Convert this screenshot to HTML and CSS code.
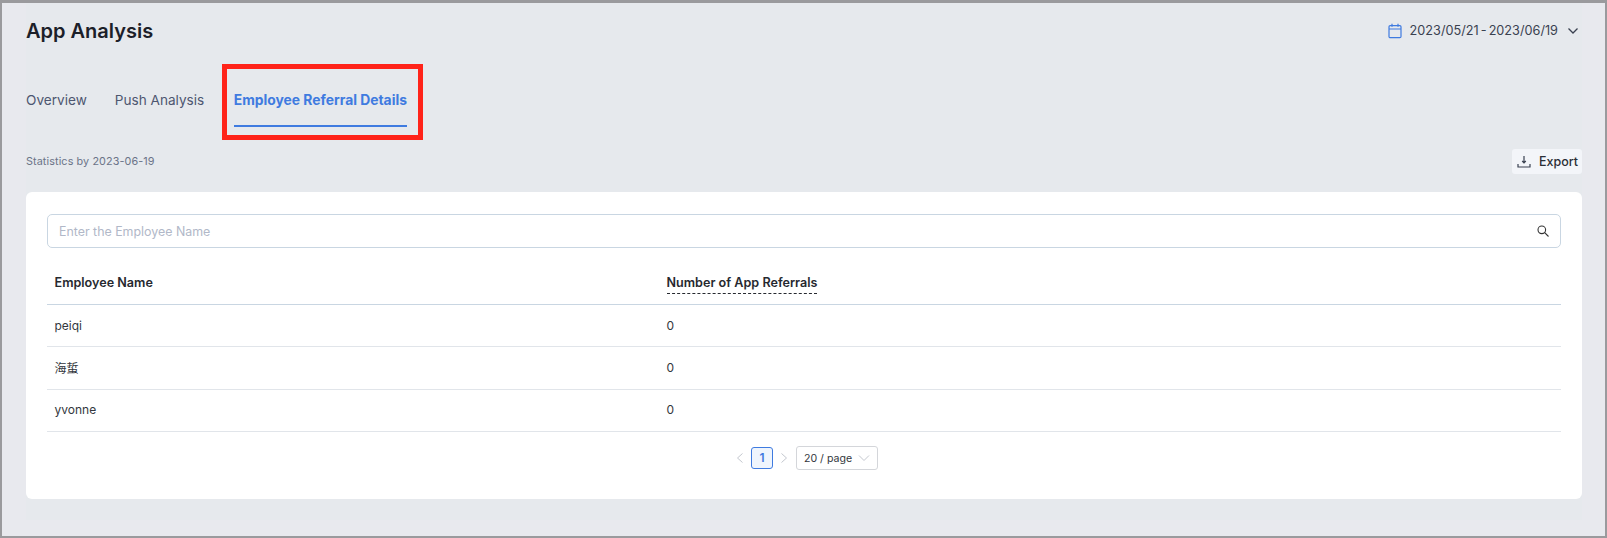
FILE: index.html
```html
<!DOCTYPE html>
<html lang="en">
<head>
<meta charset="utf-8">
<title>App Analysis</title>
<link rel="stylesheet" href="styles.css">
</head>
<body>
<div class="frame">
  <div class="page">
    <header class="top">
      <h1 class="title">App Analysis</h1>
      <div class="range">
        <svg class="cal" width="14" height="16" viewBox="0 0 14 16" fill="none" stroke="#3f7be0" stroke-width="1.2"><rect x="1" y="2.6" width="12" height="12" rx="1.2"/><path d="M1 6h12M4 .8v3M10 .8v3"/></svg>
        <span class="range-text">2023/05/21 - 2023/06/19</span>
        <svg class="chev" width="12" height="8" viewBox="0 0 12 8" fill="none" stroke="#3a4150" stroke-width="1.3"><path d="M1.500 1.500 6 6l4.500-4.500"/></svg>
      </div>
    </header>
    <nav class="tabs">
      <a class="tab">Overview</a>
      <a class="tab">Push Analysis</a>
      <a class="tab active">Employee Referral Details<span class="mark"></span></a>
    </nav>
    <div class="stats">
      <span class="stats-text">Statistics by 2023-06-19</span>
      <button class="export">
        <svg width="14" height="14" viewBox="0 0 14 14" fill="none" stroke="#3a4150" stroke-width="1.2"><path d="M7 1v6.500M5.200 6 7 7.800 8.800 6M1 9v3h12V9"/></svg>
        <span>Export</span>
      </button>
    </div>
    <section class="card">
      <div class="search">
        <span class="placeholder">Enter the Employee Name</span>
        <svg width="14" height="14" viewBox="0 0 14 14" fill="none" stroke="#333" stroke-width="1.100"><circle cx="5.800" cy="5.800" r="3.800"/><path d="m8.700 8.700 3.800 3.800"/></svg>
      </div>
      <div class="row head">
        <div class="cell"><span>Employee Name</span></div>
        <div class="cell"><span class="dashed">Number of App Referrals</span></div>
      </div>
      <div class="row"><div class="cell">peiqi</div><div class="cell">0</div></div>
      <div class="row tall"><div class="cell">海蜇</div><div class="cell">0</div></div>
      <div class="row raised"><div class="cell">yvonne</div><div class="cell">0</div></div>
      <div class="pager">
        <svg class="prev" width="10" height="12" viewBox="0 0 10 12" fill="none" stroke="#c4c8cf" stroke-width="1"><path d="M7.500 1.500 2.500 6l5 4.500"/></svg>
        <span class="pg">1</span>
        <svg class="next" width="10" height="12" viewBox="0 0 10 12" fill="none" stroke="#c4c8cf" stroke-width="1"><path d="M2.500 1.500 7.500 6l-5 4.500"/></svg>
        <div class="size">
          <span>20 / page</span>
          <svg width="12" height="8" viewBox="0 0 12 8" fill="none" stroke="#c4c8cf" stroke-width="1"><path d="M1 1.500 6 6.500l5-5"/></svg>
        </div>
      </div>
    </section>
  </div>
</div>
</body>
</html>
```

FILE: styles.css
```css
* { box-sizing: border-box; }
html, body { margin: 0; padding: 0; }
body {
  width: 1607px;
  height: 538px;
  overflow: hidden;
  font-family: Inter, "Noto Sans CJK SC", sans-serif;
  color: #2b2f36;
}
.frame {
  width: 1607px;
  height: 538px;
  background: #e8e9ee;
  border: solid #9a9a9d;
  border-width: 3px 2px 2px 2px;
}
.page {
  margin-left: 24px;
  width: 1556px;
  height: 517px;
  background: #e6e9ed;
}
.top {
  display: flex;
  justify-content: space-between;
  align-items: center;
  height: 55px;
}
.title {
  margin: 0;
  font-size: 20px;
  font-weight: 600;
  line-height: 28px;
  color: #1c2029;
}
.range {
  display: flex;
  align-items: center;
  font-size: 12.7px;
  color: #3a4150;
  margin-right: 3px;
}
.cal { margin-right: 8px; }
.range-text { margin-right: 9px; word-spacing: -1.5px; }
.tabs {
  display: flex;
  gap: 28px;
  height: 69px;
  padding-top: 7px;
}
.tab {
  position: relative;
  font-size: 13.6px;
  line-height: 70px;
  height: 62px;
  color: #4d5670;
  white-space: nowrap;
}
.tab.active {
  margin-left: 1.5px;
  font-size: 13.85px;
  color: #3f7be0;
  font-weight: 700;
  border-bottom: 2px solid #3f7be0;
}
.mark {
  position: absolute;
  left: -12px;
  right: -16px;
  top: -1px;
  height: 76px;
  border: 5px solid #ff2319;
}
.stats {
  display: flex;
  justify-content: space-between;
  align-items: center;
  height: 65px;
  padding: 22px 0 18px;
}
.stats-text { font-size: 10.8px; color: #6b7488; letter-spacing: 0.1px; }
.export {
  display: flex;
  align-items: center;
  gap: 8px;
  width: 70px;
  height: 25px;
  padding: 0 0 0 5px;
  border: 0;
  border-radius: 3px;
  background: #f3f5f9;
  font: 500 12.5px Inter, sans-serif;
  color: #2b2f36;
}
.card {
  height: 307px;
  padding: 22px 21px 0;
  background: #fff;
  border-radius: 6px;
}
.search {
  display: flex;
  justify-content: space-between;
  align-items: center;
  height: 34px;
  padding: 0 10px 0 11px;
  border: 1px solid #c9d6e2;
  border-radius: 5px;
}
.placeholder { font-size: 12.4px; color: #b1b8c8; }
.row {
  display: grid;
  grid-template-columns: 612px 1fr;
  align-items: center;
  height: 42px;
  border-bottom: 1px solid #e1e5ea;
  font-size: 12px;
  color: #33373d;
}
.row.tall { height: 43px; padding-bottom: 2px; }
.row.raised { padding-bottom: 2px; }
.row.head {
  height: 57px;
  padding-top: 13px;
  border-bottom-color: #c9d6e2;
  font-size: 12.6px;
  font-weight: 600;
  color: #26292f;
}
.cell { padding-left: 7.5px; }
.dashed {
  display: inline-block;
  margin-bottom: -3px;
  padding-bottom: 3px;
  border-bottom: 1px dashed #26292f;
}
.pager {
  display: flex;
  justify-content: center;
  align-items: center;
  height: 52px;
  padding-left: 5px;
}
.prev { margin-right: 6px; }
.next { margin: 0 7.5px 0 5.5px; }
.pg {
  width: 22px;
  height: 22px;
  text-align: center;
  line-height: 20px;
  font-size: 12px;
  font-weight: 600;
  color: #3f7be0;
  background: #eff5fd;
  border: 1px solid #3f7be0;
  border-radius: 3px;
}
.size {
  display: flex;
  justify-content: space-between;
  align-items: center;
  width: 82px;
  height: 24px;
  padding: 0 7px;
  border: 1px solid #d4d6da;
  border-radius: 3px;
  font-size: 10.6px;
  color: #33373d;
}
```
